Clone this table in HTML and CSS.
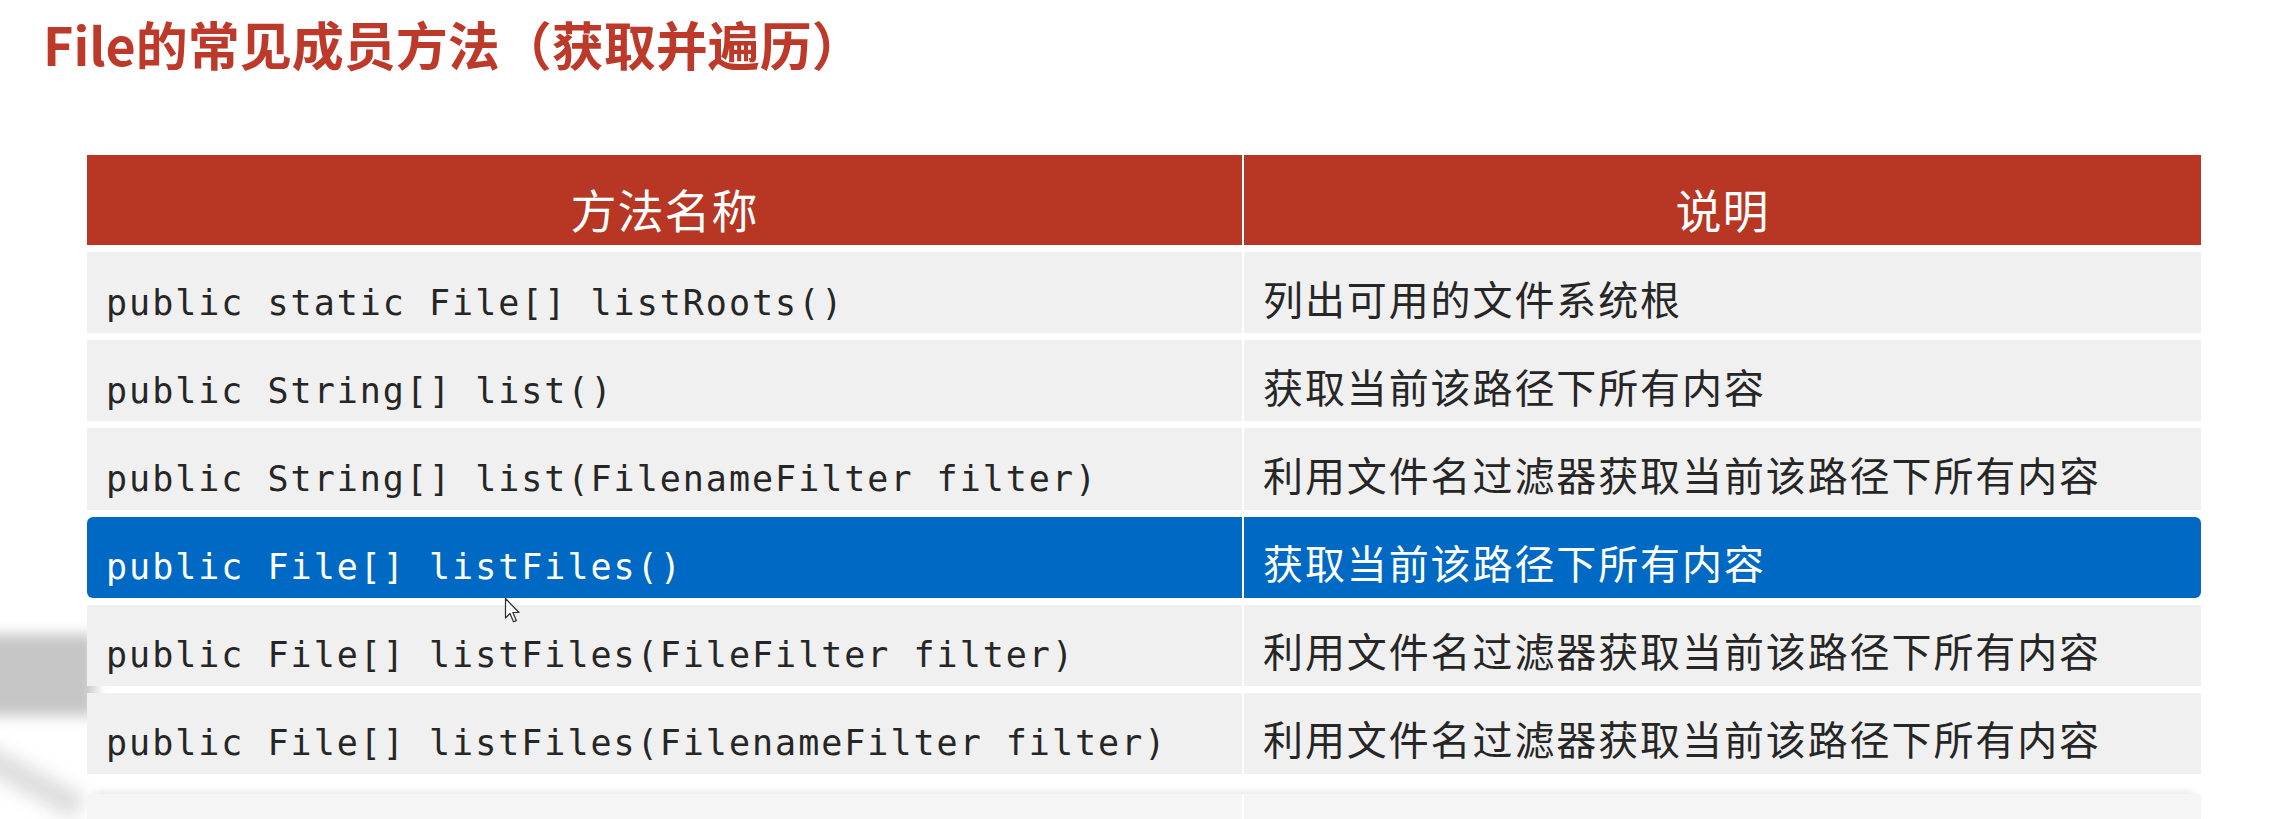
FILE: index.html
```html
<!DOCTYPE html>
<html lang="zh-CN">
<head>
<meta charset="utf-8">
<title>File的常见成员方法（获取并遍历）</title>
<link rel="stylesheet" href="styles.css">
</head>
<body>
<div class="slide">
  <div class="shade shade-band"></div>
  <div class="shade shade-wedge"></div>
  <h1 class="title">File的常见成员方法（获取并遍历）</h1>
  <table class="methods">
    <thead>
      <tr class="head">
        <th class="col-name">方法名称</th>
        <th class="col-desc">说明</th>
      </tr>
    </thead>
    <tbody>
      <tr>
        <td class="code">public static File[] listRoots()</td>
        <td class="desc">列出可用的文件系统根</td>
      </tr>
      <tr>
        <td class="code">public String[] list()</td>
        <td class="desc">获取当前该路径下所有内容</td>
      </tr>
      <tr>
        <td class="code">public String[] list(FilenameFilter filter)</td>
        <td class="desc">利用文件名过滤器获取当前该路径下所有内容</td>
      </tr>
      <tr class="selected">
        <td class="code">public File[] listFiles()</td>
        <td class="desc">获取当前该路径下所有内容</td>
      </tr>
      <tr>
        <td class="code">public File[] listFiles(FileFilter filter)</td>
        <td class="desc">利用文件名过滤器获取当前该路径下所有内容</td>
      </tr>
      <tr>
        <td class="code">public File[] listFiles(FilenameFilter filter)</td>
        <td class="desc">利用文件名过滤器获取当前该路径下所有内容</td>
      </tr>
    </tbody>
  </table>
  <div class="ghost-row">
    <div class="ghost-cell"></div>
    <div class="ghost-cell"></div>
  </div>
  <svg class="cursor" width="17" height="27" viewBox="0 0 17 27" aria-hidden="true">
    <path d="M1.5 1.5 L1.5 21 L6 16.5 L9.5 24.8 L12.3 23.6 L8.9 15.5 L15 15.5 Z" fill="#ffffff" stroke="#2a2a2a" stroke-width="1.2" stroke-linejoin="round"/>
  </svg>
</div>
</body>
</html>
```
FILE: styles.css
```css
html, body {
  margin: 0;
  padding: 0;
  background: #ffffff;
}

body {
  width: 2271px;
  height: 819px;
  overflow: hidden;
  font-family: "Noto Sans CJK SC", "Noto Sans", sans-serif;
}

.slide {
  position: relative;
  padding-top: 18px;
}

.title {
  position: relative;
  z-index: 1;
  margin: 0 0 78px 43px;
  font-family: "Noto Sans CJK SC", "Noto Sans", sans-serif;
  font-weight: 700;
  font-size: 52px;
  line-height: 52px;
  color: #bd3a2b;
  letter-spacing: 0;
}

.methods {
  position: relative;
  z-index: 1;
  margin-left: 85px;
  width: 2118px;
  border-collapse: separate;
  border-spacing: 2px 7.5px;
  table-layout: fixed;
}

.methods th,
.methods td {
  box-sizing: border-box;
  padding: 0;
}

.head {
  height: 90px;
}

.methods th {
  vertical-align: top;
  padding-top: 30px;
  background: #b83624;
  color: #ffffff;
  font-family: "Noto Sans CJK SC", sans-serif;
  font-weight: 400;
  font-size: 46px;
  line-height: 46px;
  letter-spacing: 1px;
  text-align: center;
}

.col-name {
  width: 1155px;
}

.methods tbody tr {
  height: 81.2px;
}

.methods td {
  vertical-align: baseline;
  padding-top: 25.5px;
  background: #f0f0f0;
  color: #262626;
  white-space: nowrap;
}

.code {
  padding-left: 19px !important;
  font-family: "DejaVu Sans Mono", "Liberation Mono", monospace;
  font-size: 35px;
  line-height: 41px;
  letter-spacing: 2px;
}

.desc {
  padding-left: 19px !important;
  font-family: "Noto Sans CJK SC", sans-serif;
  font-size: 40px;
  line-height: 41px;
  letter-spacing: 1.9px;
}

.selected td {
  background: #0069c4;
  color: #ffffff;
}

.selected td:first-child {
  border-radius: 6px 0 0 6px;
}

.selected td:last-child {
  border-radius: 0 6px 6px 0;
}

.ghost-row {
  position: relative;
  z-index: 1;
  display: grid;
  grid-template-columns: 1155px 957px;
  column-gap: 2px;
  margin: 13px 0 0 87px;
  width: 2114px;
  height: 40px;
  box-shadow: 0 -9px 9px -7px rgba(0, 0, 0, 0.10);
}

.ghost-cell {
  background: #f5f5f5;
}

.shade {
  position: absolute;
  z-index: 0;
  pointer-events: none;
}

.shade-band {
  left: -30px;
  top: 634px;
  width: 125px;
  height: 82px;
  background: #c6c6c6;
  filter: blur(7px);
}

.shade-wedge {
  left: -20px;
  top: 740px;
  width: 120px;
  height: 26px;
  background: #dcdcdc;
  filter: blur(9px);
  transform: rotate(28deg);
  transform-origin: left top;
}

.cursor {
  position: absolute;
  z-index: 2;
  left: 504px;
  top: 597px;
}
```
